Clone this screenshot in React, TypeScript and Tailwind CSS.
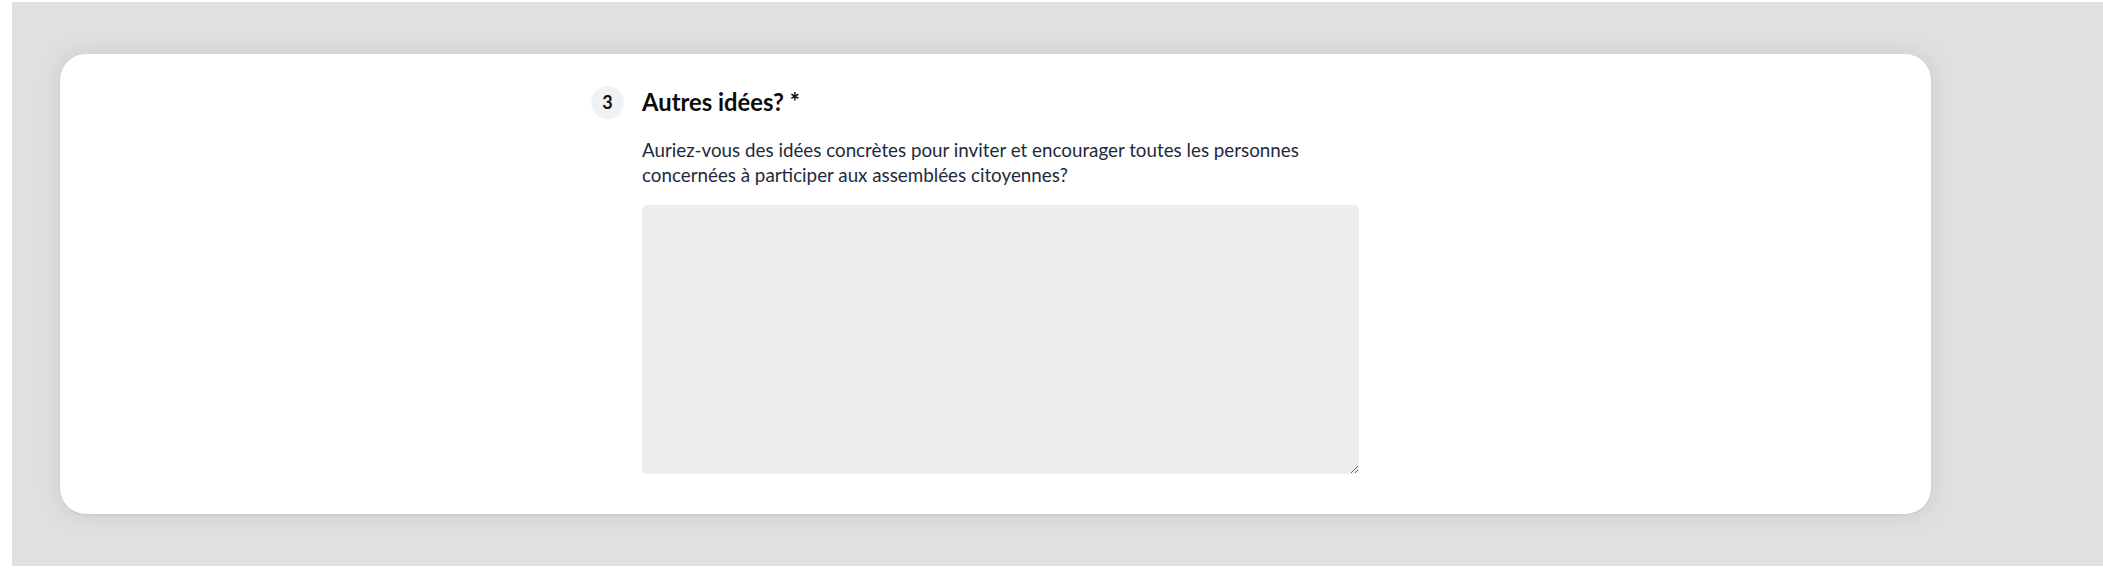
export default function App() {
  return (
    <div className="w-[2103px] h-[581px] bg-white pl-[12px] pt-[2px]" style={{ fontFamily: 'Lato, "Noto Sans", sans-serif' }}>
      <div className="h-[564px] bg-[#e0e0e0] pl-[48px] pr-[172px] pt-[52px]">
        <div className="h-[460px] bg-white rounded-[26px] shadow-[0_0_24px_rgba(0,0,0,0.10),0_1px_2px_rgba(0,0,0,0.08)] pl-[531px] pt-[32px]">
          <div className="flex w-[768px]">
            <div className="w-[51px] shrink-0 h-[32px] flex items-center">
              <div className="w-[33px] h-[33px] rounded-full bg-[#f1f2f6] flex items-center justify-center text-[18px] font-bold text-[#111]">3</div>
            </div>
            <div className="flex-1">
              <h2 className="text-[23.8px] leading-[32px] font-bold text-[#0b0b0b]">Autres idées? *</h2>
              <p className="mt-[19px] text-[18.8px] leading-[25px] text-[#1e2a3b]">
                Auriez-vous des idées concrètes pour inviter et encourager toutes les personnes<br />
                concernées à participer aux assemblées citoyennes?
              </p>
              <textarea className="mt-[18px] block w-[717px] h-[269px] bg-[#ededed] rounded-[5px] outline-none" />
            </div>
          </div>
        </div>
      </div>
    </div>
  );
}
